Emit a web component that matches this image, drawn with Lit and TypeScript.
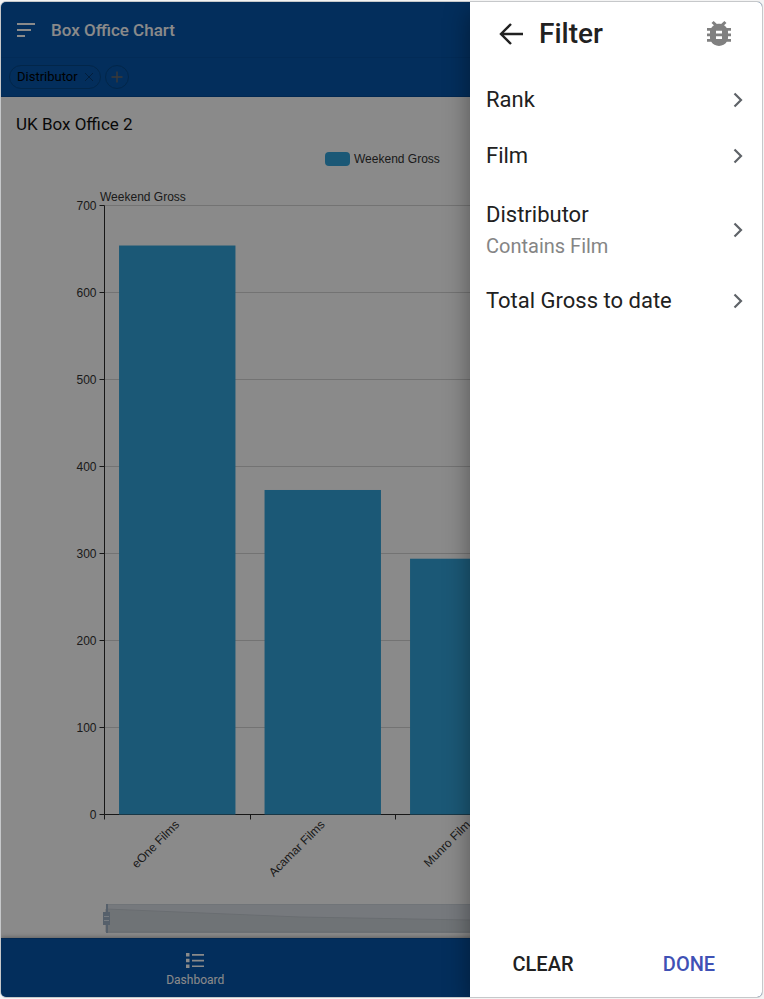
import { LitElement, html, svg, css } from "lit";
import { customElement, state } from "lit/decorators.js";

interface Bar { label: string; value: number }
interface Field { name: string; rule?: string }

@customElement("gross-chart")
class GrossChart extends LitElement {
  static styles = css`
    :host { display: block; flex: 1; min-height: 400px; overflow: hidden; }
    svg { display: block; width: 100%; height: 100%; }
    text { font: 12px "Liberation Sans", Arial, sans-serif; fill: #333; }
    .end { text-anchor: end; }
    .grid { stroke: #d4d4d4; }
    .axis { stroke: #2c2c2c; fill: none; }
    .bar { fill: #32a3da; }
    .track { fill: #dbe0e8; stroke: #cfd6de; }
    .shadow { fill: #ced5da; stroke: #c2c9d0; }
    .handle { fill: #9fb1c6; }
    .stem { stroke: #9fb1c6; stroke-width: 2; }
    .grip { stroke: #dde5ee; }
  `;

  @state() private w = 761;
  @state() private h = 792;
  private observer?: ResizeObserver;

  private bars: Bar[] = [
    { label: "eOne Films", value: 654 },
    { label: "Acamar Films", value: 373 },
    { label: "Munro Film", value: 294 },
    { label: "Disney", value: 240 },
  ];

  firstUpdated() {
    this.observer = new ResizeObserver(() => this.measure());
    this.observer.observe(this);
    this.measure();
  }

  disconnectedCallback() {
    super.disconnectedCallback();
    this.observer?.disconnect();
  }

  private measure() {
    this.w = this.clientWidth;
    this.h = this.clientHeight;
  }

  render() {
    const { w, h } = this;
    const left = 103.5;
    const right = Math.round(w * 0.9) + 0.5;
    const top = 60.5;
    const bottom = h - 123.5;
    const step = (right - left) / this.bars.length;
    const y = (v: number) => bottom - (v / 700) * (bottom - top);
    const mid = Math.round(w / 2);
    const s = h - 34;
    return html`
      <svg role="img" aria-label="Weekend Gross by distributor">
        <rect class="bar" x=${mid - 57} y="7" width="25" height="14" rx="4"></rect>
        <text x=${mid - 28} y="18">Weekend Gross</text>
        <text x="99" y="56">Weekend Gross</text>
        ${[0, 100, 200, 300, 400, 500, 600, 700].map((v) => {
          const line = Math.floor(y(v)) + 0.5;
          return svg`
            <path class="grid" d="M${left} ${line}H${right}"></path>
            <path class="axis" d="M${left - 5} ${line}H${left}"></path>
            <text class="end" x=${left - 8} y=${line + 4}>${v}</text>`;
        })}
        <path class="axis" d="M${left} ${top}V${bottom}H${right}"></path>
        ${this.bars.map((b, i) => {
          const x = left + step * i;
          const c = x + step / 2;
          return svg`
            <path class="axis" d="M${Math.floor(x) + 0.5} ${bottom}v5"></path>
            <rect class="bar" x=${x + step * 0.1} y=${y(b.value)} width=${step * 0.8} height=${bottom - y(b.value)}></rect>
            <text class="end" dy="4" transform="translate(${c} ${bottom + 8}) rotate(-45)">${b.label}</text>`;
        })}
        <rect class="track" x="105.5" y=${s + 0.5} width=${right - 105.5} height="28"></rect>
        <path class="shadow" d="M105 ${s + 5}L299 ${s + 13}L469 ${s + 16}L${right} ${s + 18}V${s + 28}H105Z"></path>
        <path class="stem" d="M106 ${s}v29"></path>
        <rect class="handle" x="102" y=${s + 8} width="7" height="13"></rect>
        <path class="grip" d="M103 ${s + 12.5}h5M103 ${s + 16.5}h5"></path>
      </svg>`;
  }
}

@customElement("app-root")
class AppRoot extends LitElement {
  static styles = css`
    :host { display: block; box-sizing: border-box; min-height: 100vh; padding: 1px 1px 1px 0; background: #f4f4f4; font-family: Roboto, sans-serif; color: #212121; }
    * { box-sizing: border-box; }
    button { border: 0; padding: 0; margin: 0; background: none; font: inherit; color: inherit; text-align: left; cursor: pointer; }
    svg { display: block; flex: none; }
    h1, h2, p, ul { margin: 0; padding: 0; font-weight: 400; list-style: none; }
    .frame { position: relative; display: flex; min-height: calc(100vh - 2px); border: 1px solid #c6c8ca; border-radius: 6px; overflow: hidden; background: #fff; }
    .page { flex: 1; min-width: 0; display: flex; flex-direction: column; }
    .bar { height: 55px; display: flex; align-items: center; gap: 16px; padding: 0 16px; background: #0655aa; color: #fff; }
    .bar h1 { font-size: 17px; line-height: 24px; font-weight: 500; }
    .chips { height: 40px; display: flex; align-items: center; gap: 4px; padding: 0 8px; background: #0655aa; border-top: 1px solid #0551a2; border-bottom: 1px solid #044b98; color: #000; }
    .chip { height: 24px; display: flex; align-items: center; gap: 6px; padding: 0 6px 0 7px; border: 1px solid #054687; border-radius: 12px; font-size: 13px; line-height: 16px; }
    .add { width: 24px; height: 24px; display: flex; align-items: center; justify-content: center; border: 1px solid #054687; border-radius: 12px; }
    .title { padding: 15px 15px 9px; font-size: 17px; line-height: 24px; color: #111; }
    .tabs { height: 59px; display: grid; grid-template-columns: 1fr 1fr; padding: 4px 0 0 4px; margin-right: -4px; background: #0655aa; border-top: 1px solid #044b98; box-shadow: 0 -1px 4px rgba(0, 0, 0, .3); }
    .tab { display: flex; flex-direction: column; align-items: center; justify-content: center; gap: 4px; color: #fff; text-decoration: none; font-size: 12px; line-height: 16px; }
    .scrim { position: absolute; inset: 0; background: rgba(0, 0, 0, .46); }
    .drawer { position: absolute; top: 0; right: 0; bottom: 0; width: 292px; display: flex; flex-direction: column; background: #fff; box-shadow: 0 8px 24px rgba(0, 0, 0, .4); }
    .head { height: 63px; display: flex; align-items: center; gap: 16px; padding: 0 31px 0 29px; }
    .head h2 { flex: 1; font-size: 28px; line-height: 32px; font-weight: 500; }
    .fields { flex: 1; padding-top: 7px; }
    .field { width: 100%; min-height: 56px; display: flex; align-items: center; justify-content: space-between; padding: 12px 19px 12px 16px; font-size: 22px; line-height: 32px; }
    .ruled { padding: 15px 19px 12px 16px; }
    .rule { display: block; font-size: 20px; line-height: 30px; color: #858585; }
    .actions { height: 66px; display: grid; grid-template-columns: 1fr 1fr; font-size: 20px; font-weight: 500; line-height: 24px; }
    .actions button { text-align: center; }
    .done { color: #3f51b5; }
  `;

  private fields: Field[] = [
    { name: "Rank" },
    { name: "Film" },
    { name: "Distributor", rule: "Contains Film" },
    { name: "Total Gross to date" },
  ];

  render() {
    return html`
      <div class="frame">
        <div class="page">
          <header class="bar">
            <button aria-label="Menu">
              <svg width="18" height="14" fill="none" stroke="#fff" stroke-width="2"><path d="M0 1h18M0 7h14M0 13h8"></path></svg>
            </button>
            <h1>Box Office Chart</h1>
          </header>
          <div class="chips">
            <button class="chip">Distributor
              <svg width="10" height="10" fill="none" stroke="#04386f" stroke-width="1"><path d="M1 1l8 8M9 1l-8 8"></path></svg>
            </button>
            <button class="add" aria-label="Add field">
              <svg width="12" height="12" fill="none" stroke="#6f6a66" stroke-width="1.400"><path d="M6 0.500v11M0.500 6h11"></path></svg>
            </button>
          </div>
          <h2 class="title">UK Box Office 2</h2>
          <gross-chart></gross-chart>
          <nav class="tabs">
            <a class="tab" href="#dashboard">
              <svg width="18" height="15" fill="#fff"><path d="M0 0h3.500v3.500H0zM0 5.700h3.500v3.500H0zM0 11.400h3.500v3.500H0zM6 1h12v1.700H6zM6 6.700h12v1.700H6zM6 12.400h12v1.700H6z"></path></svg>
              Dashboard
            </a>
          </nav>
        </div>
        <div class="scrim"></div>
        <aside class="drawer" aria-label="Filter">
          <div class="head">
            <button aria-label="Back">
              <svg width="24" height="22" fill="none" stroke="#212121" stroke-width="2.400"><path d="M12 1L2 11l10 10M2 11h22"></path></svg>
            </button>
            <h2>Filter</h2>
            <button aria-label="Debug">
              <svg width="24" height="25" viewBox="4 3 16 18" preserveAspectRatio="none" fill="#808080"><path d="M20 8h-2.810c-.45-.78-1.070-1.450-1.820-1.960L17 4.410 15.590 3l-2.170 2.170C12.960 5.060 12.490 5 12 5s-.96.06-1.410.17L8.410 3 7 4.410l1.620 1.630C7.880 6.550 7.260 7.220 6.810 8H4v2h2.090c-.05.33-.09.66-.09 1v1H4v2h2v1c0 .34.04.67.09 1H4v2h2.810c1.040 1.790 2.970 3 5.190 3s4.150-1.210 5.190-3H20v-2h-2.090c.05-.33.09-.66.09-1v-1h2v-2h-2v-1c0-.34-.04-.67-.09-1H20V8zm-6 8h-4v-2h4v2zm0-4h-4v-2h4v2z"></path></svg>
            </button>
          </div>
          <ul class="fields">
            ${this.fields.map((f) => html`
              <li>
                <button class="field ${f.rule ? "ruled" : ""}">
                  <span>${f.name}${f.rule ? html`<span class="rule">${f.rule}</span>` : ""}</span>
                  <svg width="10" height="16" fill="none" stroke="#5f6368" stroke-width="2.200"><path d="M1.500 1.500L8 8l-6.500 6.500"></path></svg>
                </button>
              </li>`)}
          </ul>
          <div class="actions">
            <button>CLEAR</button>
            <button class="done">DONE</button>
          </div>
        </aside>
      </div>`;
  }
}
